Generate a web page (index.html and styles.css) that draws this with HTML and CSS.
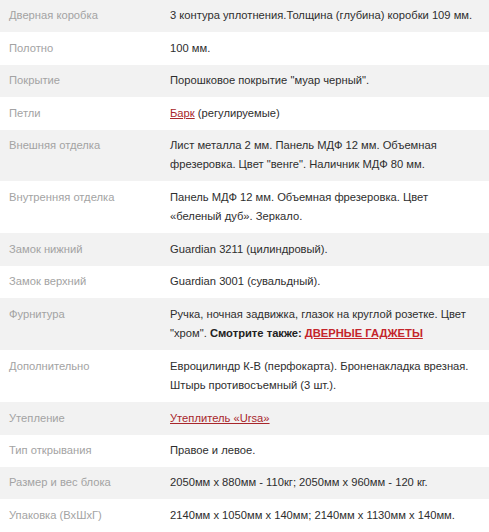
FILE: index.html
```html
<!DOCTYPE html>
<html>
<head>
  <meta charset="utf-8" />
  <title>Характеристики двери</title>
  <link rel="stylesheet" href="styles.css">
</head>
<body>
  <table class="specs">
    <tr>
      <td class="name">Дверная коробка</td>
      <td class="value">3 контура уплотнения.Толщина (глубина) коробки 109 мм.</td>
    </tr>
    <tr>
      <td class="name">Полотно</td>
      <td class="value">100 мм.</td>
    </tr>
    <tr>
      <td class="name">Покрытие</td>
      <td class="value">Порошковое покрытие "муар черный".</td>
    </tr>
    <tr>
      <td class="name">Петли</td>
      <td class="value"><a href="#">Барк</a> (регулируемые)</td>
    </tr>
    <tr>
      <td class="name">Внешняя отделка</td>
      <td class="value">Лист металла 2 мм. Панель МДФ 12 мм. Объемная фрезеровка. Цвет "венге". Наличник МДФ 80 мм.</td>
    </tr>
    <tr>
      <td class="name">Внутренняя отделка</td>
      <td class="value">Панель МДФ 12 мм. Объемная фрезеровка. Цвет «беленый дуб». Зеркало.</td>
    </tr>
    <tr>
      <td class="name">Замок нижний</td>
      <td class="value">Guardian 3211 (цилиндровый).</td>
    </tr>
    <tr>
      <td class="name">Замок верхний</td>
      <td class="value">Guardian 3001 (сувальдный).</td>
    </tr>
    <tr>
      <td class="name">Фурнитура</td>
      <td class="value">Ручка, ночная задвижка, глазок на круглой розетке. Цвет "хром". <b>Смотрите также: <a href="#" class="hot">ДВЕРНЫЕ ГАДЖЕТЫ</a></b></td>
    </tr>
    <tr>
      <td class="name">Дополнительно</td>
      <td class="value">Евроцилиндр К-В (перфокарта). Броненакладка врезная. Штырь противосъемный (3 шт.).</td>
    </tr>
    <tr>
      <td class="name">Утепление</td>
      <td class="value"><a href="#">Утеплитель «Ursa»</a></td>
    </tr>
    <tr>
      <td class="name">Тип открывания</td>
      <td class="value">Правое и левое.</td>
    </tr>
    <tr>
      <td class="name">Размер и вес блока</td>
      <td class="value">2050мм х 880мм - 110кг; 2050мм х 960мм - 120 кг.</td>
    </tr>
    <tr>
      <td class="name">Упаковка (ВхШхГ)</td>
      <td class="value">2140мм х 1050мм х 140мм; 2140мм х 1130мм х 140мм.</td>
    </tr>
  </table>
</body>
</html>
```

FILE: styles.css
```css
body {
  margin: 0;
  background-color: #fff;
  font-family: "Liberation Sans", Arial, sans-serif;
  font-size: 11.2px;
  color: #333;
}

.specs {
  width: 100%;
  border-collapse: collapse;
  table-layout: fixed;
}

.specs tr:nth-child(odd) {
  background-color: #f2f2f2;
}

.specs td {
  padding: 6.4px 12px 6.4px 9px;
  line-height: 19.6px;
  vertical-align: top;
  text-align: left;
}

.specs .name {
  width: 140px;
  color: #a3a3a3;
}

.specs .value {
  color: #2e2e2e;
}

.specs a {
  color: #a8262b;
  text-decoration: underline;
}

.specs a.hot {
  color: #c4252b;
}

.specs b {
  color: #222;
}
```
